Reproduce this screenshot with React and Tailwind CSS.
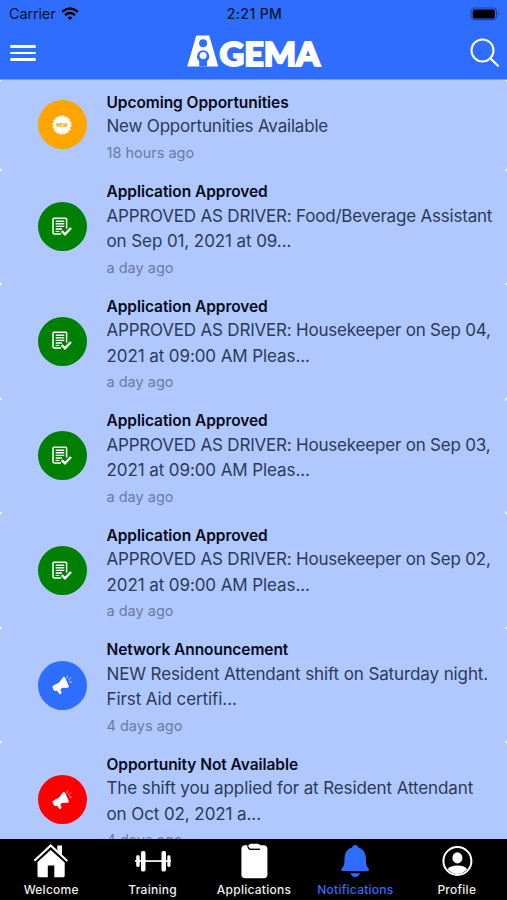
import React from 'react';
import clsx from 'clsx';

const notifications = [
  { type: 'new', title: 'Upcoming Opportunities', lines: ['New Opportunities Available'], time: '18 hours ago' },
  { type: 'approved', title: 'Application Approved', lines: ['APPROVED AS DRIVER: Food/Beverage Assistant', 'on Sep 01, 2021 at 09...'], time: 'a day ago' },
  { type: 'approved', title: 'Application Approved', lines: ['APPROVED AS DRIVER: Housekeeper on Sep 04,', '2021 at 09:00 AM Pleas...'], time: 'a day ago' },
  { type: 'approved', title: 'Application Approved', lines: ['APPROVED AS DRIVER: Housekeeper on Sep 03,', '2021 at 09:00 AM Pleas...'], time: 'a day ago' },
  { type: 'approved', title: 'Application Approved', lines: ['APPROVED AS DRIVER: Housekeeper on Sep 02,', '2021 at 09:00 AM Pleas...'], time: 'a day ago' },
  { type: 'network', title: 'Network Announcement', lines: ['NEW Resident Attendant shift on Saturday night.', 'First Aid certifi...'], time: '4 days ago' },
  { type: 'unavailable', title: 'Opportunity Not Available', lines: ['The shift you applied for at Resident Attendant', 'on Oct 02, 2021 a...'], time: '4 days ago' },
];

const badgeColors = {
  new: 'bg-[#ffa500]',
  approved: 'bg-[#008000]',
  network: 'bg-[#2f6dff]',
  unavailable: 'bg-[#ff0000]',
};

const bodyTracking = {
  new: 'tracking-[-0.19px]',
  approved: 'tracking-[-0.2px]',
  network: 'tracking-[-0.11px]',
  unavailable: 'tracking-[-0.11px]',
};

const NewIcon = () => (
  <svg className="h-5 w-5" viewBox="0 0 20 20">
    <circle cx="10" cy="10" r="8.7" fill="#fff" />
    <circle cx="10" cy="10" r="8.9" fill="none" stroke="#fff" strokeWidth="1.6" strokeDasharray="2 1.495" />
    <text x="10" y="11.9" fontSize="5" fontWeight="800" textAnchor="middle" textLength="11.5" lengthAdjust="spacingAndGlyphs" fill="#ffa500" fontFamily="Inter, sans-serif">NEW</text>
  </svg>
);

const ApprovedIcon = () => (
  <svg className="h-5 w-5" viewBox="0 0 20 20" fill="none" stroke="#fff">
    <path d="M9 17H2.5Q1 17 1 15.5V2.2Q1 1.2 2 1.2H13.6Q14.6 1.2 14.6 2.2V11.5" strokeWidth="1.5" strokeLinejoin="round" />
    <path d="M3.7 4.2H12.2M3.7 6.8H12.2M3.7 9.4H12.2M3.7 12H10" strokeWidth="1.4" />
    <path d="M3.5 14.4H7.5" strokeWidth="1" />
    <path d="M9.7 14.2L13 17.3L19 11" strokeWidth="2.5" />
  </svg>
);

const MegaphoneIcon = () => (
  <svg className="h-5 w-5" viewBox="0 0 20 20" fill="#fff">
    <path d="M11.4 1.8Q12.8 1.6 13.2 3L16.8 11Q17.1 12.5 15.5 12.8L10 13.1L8.5 14.2L9.5 17.5Q9.7 18.5 8.8 18.8L7.6 19.2L4.9 15.6L3.4 16Q2.4 16.2 1.8 15L.5 12.4Q.2 11.4 1.2 10.8L7.1 7.4Z" />
    <path d="M14.8 3L15.6.8M16.6 4.5L18.9 2.7M17.3 6.9L19.6 7.1" stroke="#fff" strokeWidth="1" strokeLinecap="round" opacity=".6" />
  </svg>
);

const badgeIcons = {
  new: NewIcon,
  approved: ApprovedIcon,
  network: MegaphoneIcon,
  unavailable: MegaphoneIcon,
};

const HomeIcon = () => (
  <svg className="h-9 w-9" viewBox="0 0 36 36" fill="#fff">
    <path d="M1.4 17.7L17.7 2.5L34.3 18" fill="none" stroke="#fff" strokeWidth="2.2" />
    <path d="M24.3 2.6H29V12.6L24.3 8.2Z" />
    <path d="M4.5 19L17.7 6.9L31.7 19.5V32.4Q31.7 34.3 29.8 34.3H21.3V22.5H14.8V34.3H6.4Q4.5 34.3 4.5 32.4Z" />
  </svg>
);

const DumbbellIcon = () => (
  <svg className="h-9 w-9" viewBox="0 0 36 36" fill="#fff">
    <rect x="0" y="17.2" width="36" height="1.7" />
    <rect x="1.2" y="12.3" width="3.5" height="11.7" rx="1.4" />
    <rect x="6" y="8" width="4.5" height="20.5" rx="1.7" />
    <rect x="26.5" y="8" width="4.5" height="20.5" rx="1.7" />
    <rect x="32.3" y="12.3" width="3.2" height="11.7" rx="1.4" />
  </svg>
);

const ClipboardIcon = () => (
  <svg className="h-9 w-9" viewBox="0 0 36 36">
    <rect x="5.4" y="2.3" width="26" height="33" rx="3.8" fill="#fff" />
    <path d="M11.8 2.2Q12.2 6.3 14.6 6.3H23.8" fill="none" stroke="#000" strokeWidth="1.5" />
    <path d="M12.6 2.4Q13.4.7 15 .7H21.8Q23.6.7 24.2 2.4V3.6Q24 5.2 22.4 5.2H14.6Q13 5.2 12.6 3.6Z" fill="#fff" />
  </svg>
);

const BellIcon = () => (
  <svg className="h-9 w-9" viewBox="0 0 36 36" fill="#2f6dff">
    <path d="M18.2 2Q20.8 2 21.4 4.4C26.4 5.8 28.8 10 28.9 15.5C29 21.3 29 22.5 31.4 25.1Q32.4 26.4 31.6 28H4.8Q3.9 26.4 5 25.1C7.4 22.5 7.3 21.3 7.5 15.5C7.7 10 10 5.8 15 4.4Q15.6 2 18.2 2Z" />
    <path d="M13.4 30.3H23Q21.8 34 18.2 34T13.4 30.3Z" />
  </svg>
);

const ProfileIcon = () => (
  <svg className="h-9 w-9" viewBox="0 0 36 36" fill="#fff">
    <circle cx="18.4" cy="18" r="14" fill="none" stroke="#fff" strokeWidth="2" />
    <ellipse cx="18.4" cy="14.9" rx="5" ry="5.6" />
    <path d="M8.7 26.3Q11 22.7 18.4 22.6T28.1 26.3Q24 31 18.4 31T8.7 26.3Z" />
  </svg>
);

const tabs = [
  { label: 'Welcome', icon: HomeIcon },
  { label: 'Training', icon: DumbbellIcon },
  { label: 'Applications', icon: ClipboardIcon },
  { label: 'Notifications', icon: BellIcon, active: true },
  { label: 'Profile', icon: ProfileIcon },
];

const StatusBar = () => (
  <div className="grid h-7 grid-cols-3 items-center pr-[7px] pl-[9px] text-[14.5px] text-[#07142f]">
    <div className="flex items-center gap-[6px]">
      <span className="tracking-[-0.15px]">Carrier</span>
      <svg className="h-[14px] w-[18px]" viewBox="0 0 19 15" fill="none" stroke="#000" strokeWidth="2.5">
        <path d="M1 5.2Q9.5-2 18 5.2" />
        <path d="M4.2 8.8Q9.5 4.2 14.8 8.8" />
        <path d="M6.7 11.3Q9.5 9 12.3 11.3L9.5 14Z" fill="#000" stroke="none" />
      </svg>
    </div>
    <span className="-mt-px text-center text-[14px] font-medium tracking-[0.4px] whitespace-nowrap">2:21 PM</span>
    <svg className="h-[14px] w-[30px] justify-self-end" viewBox="0 0 30 14">
      <rect x="1" y="1" width="25.5" height="11.6" rx="3.5" fill="none" stroke="#1c419a" strokeWidth="1.1" />
      <rect x="2.7" y="2.4" width="22.2" height="9" rx="2" fill="#000" />
      <path d="M28 4.8Q30 6.8 28 8.8Z" fill="#1c419a" />
    </svg>
  </div>
);

const Logo = () => (
  <svg className="h-9 w-[140px]" viewBox="0 0 140 36">
    <path d="M12.3 0.4H25.2L34.3 31.6H3.2Z" fill="#fff" />
    <path d="M15.2 31.6V26.3A6.2 6.2 0 1 1 23 26.3V31.6Z" fill="#2f6dff" />
    <circle cx="19.1" cy="8.2" r="4" fill="#2f6dff" />
    <circle cx="19.1" cy="20.4" r="3.5" fill="#fff" />
    <text x="35.6" y="30.7" fontFamily="Lato, sans-serif" fontWeight="900" fontSize="33" textLength="100.3" lengthAdjust="spacingAndGlyphs" fill="#fff" stroke="#fff" strokeWidth="2">GEMA</text>
  </svg>
);

const Header = () => (
  <div className="h-20 shrink-0 border-b border-[#729bff] bg-[#2f6dff]">
    <StatusBar />
    <div className="flex h-[50px] items-center justify-between pr-[7px] pl-[10px]">
      <button aria-label="Menu" className="flex w-[27px] flex-col gap-[4px]">
        <span className="h-[2.5px] w-[26px] rounded-full bg-white" />
        <span className="h-[2.5px] w-[26px] rounded-full bg-white" />
        <span className="h-[2.5px] w-[26px] rounded-full bg-white" />
      </button>
      <Logo />
      <button aria-label="Search">
        <svg className="h-[30px] w-[30px]" viewBox="0 0 30 30" fill="none" stroke="#fff" strokeWidth="2">
          <circle cx="12.5" cy="12.4" r="11" />
          <path d="M20.5 20.5L28 27.7" strokeWidth="2.2" strokeLinecap="round" />
        </svg>
      </button>
    </div>
  </div>
);

const NotificationRow = ({ item }) => {
  const Icon = badgeIcons[item.type];
  return (
    <li className={clsx('flex shrink-0 items-center rounded-[3px] bg-[#b1c8ff] pl-[37.5px]', item.lines.length === 1 ? 'h-[89.5px]' : 'h-[114.6px]')}>
      <div className={clsx('flex h-[49px] w-[49px] shrink-0 items-center justify-center rounded-full', badgeColors[item.type])}>
        <Icon />
      </div>
      <div className="ml-[20px] flex h-full flex-col pt-[10.5px] whitespace-nowrap">
        <h2 className="text-[15.5px] leading-[23.5px] font-semibold tracking-[-0.06px] text-[#050b18]">{item.title}</h2>
        {item.lines.map((line, i) => (
          <p key={line} className={clsx('text-[17px] leading-[25.5px] text-[#2a3a58]', i === 0 ? bodyTracking[item.type] : 'tracking-[-0.09px]')}>{line}</p>
        ))}
        <span className="text-[14.5px] leading-[25px] text-[#6b7b9f]">{item.time}</span>
      </div>
    </li>
  );
};

const TabBar = () => (
  <nav className="grid h-[61px] shrink-0 grid-cols-5 bg-black">
    {tabs.map(({ label, icon: Icon, active }) => (
      <button key={label} className="flex flex-col items-center pt-[4px] pl-px">
        <Icon />
        <span className={clsx('mt-[3px] text-[12px] leading-4 font-medium tracking-[0.25px]', active ? 'text-[#2f6dff]' : 'text-[#eeeeee]')}>{label}</span>
      </button>
    ))}
  </nav>
);

const App = () => {
  return (
    <div className="flex h-[900px] w-[507px] flex-col overflow-hidden bg-white font-['Inter',sans-serif]">
      <Header />
      <ul className="flex min-h-0 flex-1 flex-col overflow-hidden">
        {notifications.map((item, i) => (
          <NotificationRow key={i} item={item} />
        ))}
      </ul>
      <TabBar />
    </div>
  );
};

export default App;
